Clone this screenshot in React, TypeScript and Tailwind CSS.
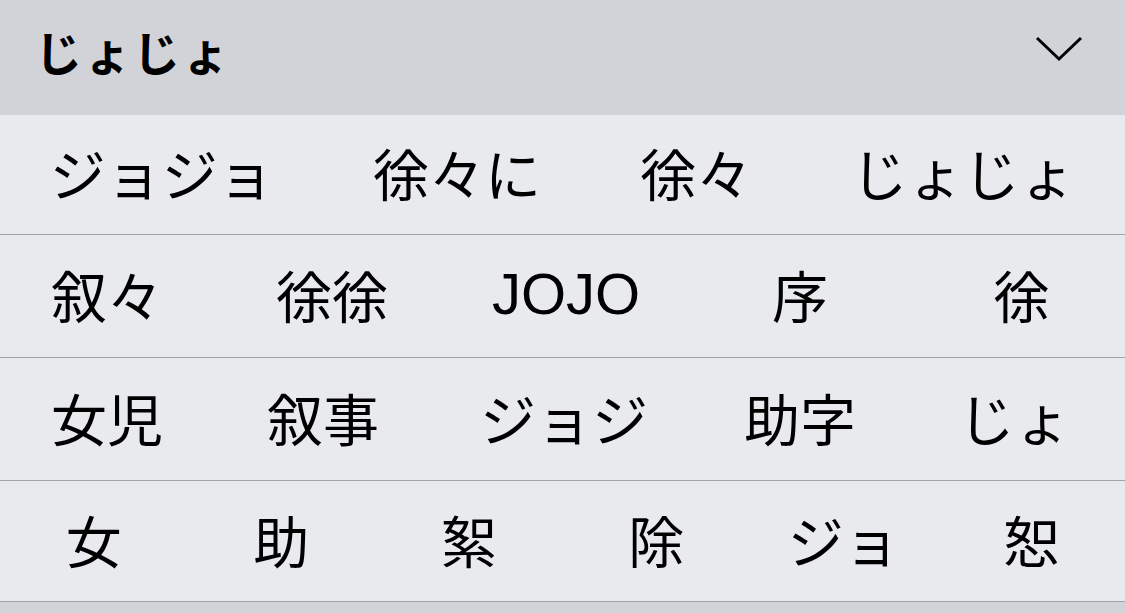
const row2 = [
  { t: "叙々", w: "w-[214px]" },
  { t: "徐徐", w: "w-[236px]" },
  { t: "JOJO", w: "w-[232px]" },
  { t: "序", w: "w-[236px]" },
  { t: "徐", w: "flex-1" },
];

const row3 = [
  { t: "女児", w: "w-[214px]" },
  { t: "叙事", w: "w-[218px]" },
  { t: "ジョジ", w: "w-[264px]" },
  { t: "助字", w: "w-[208px]" },
  { t: "じょ", w: "flex-1" },
];

const row4 = ["女", "助", "絮", "除", "ジョ", "恕"];

export default function App() {
  return (
    <div
      className="w-full min-h-[613px] bg-[#d1d3d8] text-black overflow-hidden"
      style={{ fontFamily: '"Noto Sans CJK JP", sans-serif' }}
    >
      {/* header */}
      <div className="h-[115px] flex items-center justify-between pl-[35px] pr-[42px]">
        <span className="text-[47px] font-bold leading-none tracking-[2px] -mt-[14px]">じょじょ</span>
        <svg width="48" height="26" viewBox="0 0 48 26" className="-mt-[18px]">
          <path d="M2 2 L24 23 L46 2" fill="none" stroke="#000" strokeWidth="3" />
        </svg>
      </div>

      <div className="bg-[#e9eaee] text-[56px] leading-none font-normal">
        {/* row 1 */}
        <div className="h-[120px] flex items-center justify-around pb-[5px] border-b border-[#a1a1a6]">
          <span>ジョジョ</span>
          <span>徐々に</span>
          <span>徐々</span>
          <span>じょじょ</span>
        </div>

        {/* row 2 */}
        <div className="h-[123px] flex items-center pb-[4px] border-b border-[#a1a1a6]">
          {row2.map((c) =>
            c.t === "JOJO" ? (
              <div
                key={c.t}
                className={`${c.w} text-center text-[58px]`}
                style={{ fontFamily: '"Liberation Sans", Arial, sans-serif' }}
              >
                {c.t}
              </div>
            ) : (
              <div key={c.t} className={`${c.w} text-center`}>
                {c.t}
              </div>
            )
          )}
        </div>

        {/* row 3 */}
        <div className="h-[123px] flex items-center pb-[4px] border-b border-[#a1a1a6]">
          {row3.map((c) => (
            <div key={c.t} className={`${c.w} text-center`}>
              {c.t}
            </div>
          ))}
        </div>

        {/* row 4 */}
        <div className="h-[121px] flex items-center pb-[4px] border-b border-[#a1a1a6]">
          {row4.map((c) => (
            <div key={c} className="flex-1 text-center">
              {c}
            </div>
          ))}
        </div>
      </div>
    </div>
  );
}
